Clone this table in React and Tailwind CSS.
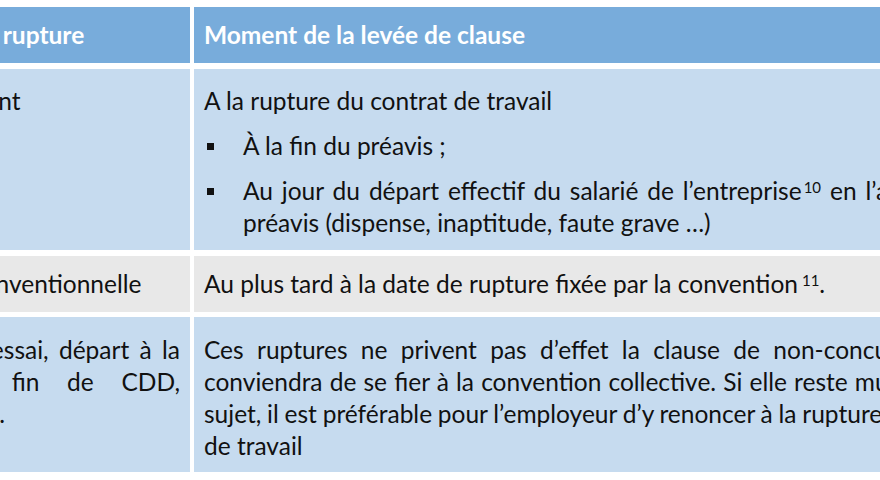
import React from "react";

const J = ({ children, className = "" }) => (
  <div className={"text-justify [text-align-last:justify] whitespace-nowrap " + className}>{children}</div>
);

const Bullet = () => (
  <div className="w-[39px] shrink-0 h-[32px] flex items-center pl-[3px]">
    <div className="w-[7px] h-[7px] bg-[#111]" />
  </div>
);

export default function App() {
  return (
    <div
      className="w-[880px] h-[480px] overflow-hidden bg-white pt-[7px] text-[#111] text-[24.5px] leading-[32px]"
      style={{ fontFamily: "Lato, 'Open Sans', sans-serif" }}
    >
      <div className="-ml-[110px] w-[1108px] flex flex-col gap-[6px]">
        {/* Header */}
        <div className="flex gap-[4px] h-[56px]">
          <div className="w-[300px] shrink-0 bg-[#78acdb] flex items-center px-[10px] font-bold text-white">
            Mode de rupture
          </div>
          <div className="w-[804px] shrink-0 bg-[#78acdb] flex items-center px-[10px] font-bold text-white">
            Moment de la levée de clause
          </div>
        </div>

        {/* Row 1 */}
        <div className="flex gap-[4px] h-[181px]">
          <div className="w-[300px] shrink-0 bg-[#c6dbef] px-[10px] pt-[16px]">
            <div className="-ml-[22px]">Licenciement</div>
          </div>
          <div className="w-[804px] shrink-0 bg-[#c6dbef] px-[10px] pt-[16px] flex flex-col gap-[13px]">
            <div>A la rupture du contrat de travail</div>
            <div className="flex">
              <Bullet />
              <div>À la fin du préavis ;</div>
            </div>
            <div className="flex">
              <Bullet />
              <div className="flex-1">
                <J className="w-[756px]">
                  Au jour du départ effectif du salarié de l’entreprise
                  <sup className="text-[15px] ml-[2px]">10</sup> en l’absence de
                </J>
                <div>préavis (dispense, inaptitude, faute grave …)</div>
              </div>
            </div>
          </div>
        </div>

        {/* Row 2 */}
        <div className="flex gap-[4px] h-[56px]">
          <div className="w-[300px] shrink-0 bg-[#e8e8e8] flex items-center px-[10px]">
            <div className="-ml-[22px]">Rupture conventionnelle</div>
          </div>
          <div className="w-[804px] shrink-0 bg-[#e8e8e8] flex items-center px-[10px]">
            <div>
              Au plus tard à la date de rupture fixée par la convention
              <sup className="text-[15px] ml-[4px]">11</sup>.
            </div>
          </div>
        </div>

        {/* Row 3 */}
        <div className="flex gap-[4px] h-[155px] mt-[-1px]">
          <div className="w-[300px] shrink-0 bg-[#c6dbef] px-[10px] pt-[17px]">
            <J className="-ml-[20px] w-[300px]">Période d’essai, départ à la</J>
            <J className="w-[280px]">retraite, fin de CDD,</J>
            <div className="-ml-[8px]">démission.</div>
          </div>
          <div className="w-[804px] shrink-0 bg-[#c6dbef] px-[10px] pt-[17px] whitespace-nowrap">
            <J className="w-[784px]">Ces ruptures ne privent pas d’effet la clause de non-concurrence. Il</J>
            <J className="w-[778px]">conviendra de se fier à la convention collective. Si elle reste muette à ce</J>
            <div className="[word-spacing:-0.5px]">sujet, il est préférable pour l’employeur d’y renoncer à la rupture du contrat</div>
            <div>de travail</div>
          </div>
        </div>
      </div>
    </div>
  );
}
